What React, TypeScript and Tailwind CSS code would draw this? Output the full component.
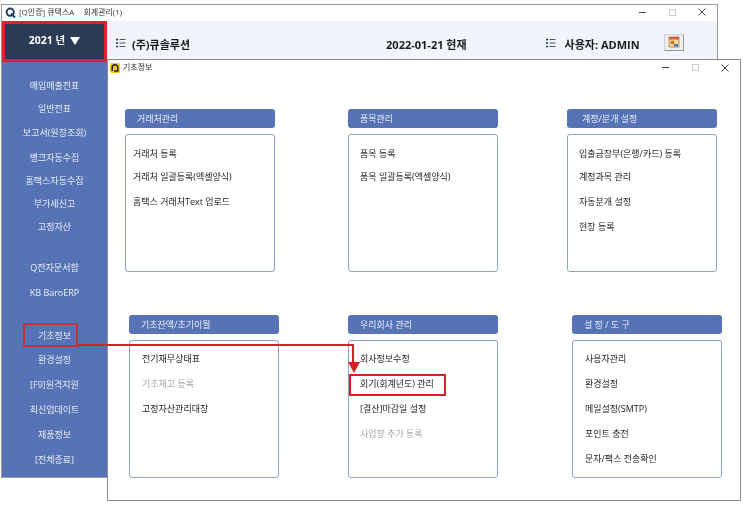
const FONT = "font-['Open_Sans','Noto_Sans_CJK_KR',sans-serif]";

const sideTop = [
  { label: "매입매출전표", h: 22.5 },
  { label: "일반전표", h: 24 },
  { label: "보고서(원장조회)", h: 25 },
  { label: "뱅크자동수집", h: 23.5 },
  { label: "홈택스자동수집", h: 23.5 },
  { label: "부가세신고", h: 23 },
  { label: "고정자산", h: 21.5 },
];
const sideMid = ["Q전자문서함", "KB BaroERP"];
const sideBottom = ["기초정보", "환경설정", "[F9]원격지원", "최신업데이트", "제품정보", "[전체종료]"];

function QLogo() {
  return (
    <svg width="11" height="11" viewBox="0 0 11 11" className="shrink-0">
      <circle cx="5.2" cy="5.2" r="3.6" fill="none" stroke="#1f3a5f" strokeWidth="2" />
      <path d="M6 6.5 L10 10.5" stroke="#1f3a5f" strokeWidth="2" />
    </svg>
  );
}

function ChildLogo() {
  return (
    <div className="w-[10px] h-[10px] rounded-[2px] bg-[#f5c518] flex items-center justify-center shrink-0">
      <svg width="8" height="8" viewBox="0 0 8 8">
        <path d="M1.2 7 V3.6 A2.8 2.8 0 0 1 6.8 3.6 V7 H3" fill="none" stroke="#222" strokeWidth="1.5" />
      </svg>
    </div>
  );
}

function ListIcon() {
  return (
    <svg width="10" height="10" viewBox="0 0 10 10" className="shrink-0 mt-[-4px]">
      <path d="M0 1.5h2M0 5h2M0 8.5h2" stroke="#1e2a8a" strokeWidth="1.6" />
      <path d="M3.5 1.5h6M3.5 5h6M3.5 8.5h6" stroke="#555" strokeWidth="1" />
    </svg>
  );
}

function WinButtons({ className }: { className: string }) {
  return (
    <div className={`flex items-center ${className}`}>
      <div className="w-[7px] h-px bg-[#444]" />
      <div className="ml-[23px] w-[7px] h-[7px] border border-[#cfcfcf]" />
      <svg width="8" height="8" viewBox="0 0 8 8" className="ml-[22px]">
        <path d="M0.5 0.5 L7.5 7.5 M7.5 0.5 L0.5 7.5" stroke="#333" strokeWidth="0.9" />
      </svg>
    </div>
  );
}

function Panel({
  title,
  items,
  rowH = 25,
  top = 5,
  left = 11,
  titleLeft = 12,
}: {
  title: string;
  items: { label: string; h?: number; muted?: boolean }[];
  rowH?: number;
  top?: number;
  left?: number;
  titleLeft?: number;
}) {
  return (
    <div className="w-[150px] shrink-0">
      <div
        className="h-[19px] rounded-[3px] bg-[#5673b5] flex items-center text-[9px] text-[#e8edf7]"
        style={{ paddingLeft: titleLeft }}
      >
        {title}
      </div>
      <div
        className="mt-[6px] h-[138px] rounded-[3px] border border-[#8fa3c7] bg-white flex flex-col text-[9px] text-[#222]"
        style={{ paddingTop: top, paddingLeft: left }}
      >
        {items.map((it) => (
          <div
            key={it.label}
            className={`flex items-center ${it.muted ? "text-[#a8a8a8]" : ""}`}
            style={{ height: it.h ?? rowH }}
          >
            {it.label}
          </div>
        ))}
      </div>
    </div>
  );
}

export default function App() {
  return (
    <div className={`relative w-[744px] h-[506px] bg-white overflow-hidden blur-[0.3px] ${FONT}`}>
      {/* Main window */}
      <div className="absolute left-px top-1 w-[717px] h-[474px] border border-[#9a9a9a] bg-white flex flex-col">
        <div className="h-[16px] flex items-center pl-[3px] pb-[2px] text-[8px] text-[#333] shrink-0">
          <QLogo />
          <span className="ml-[3px]">[Q인증] 큐택스A</span>
          <span className="ml-[9px]">회계관리(1)</span>
          <WinButtons className="ml-auto mr-[11px]" />
        </div>
        <div className="flex-1 flex min-h-0">
          <div className="w-[105px] bg-[#5673b5] flex flex-col shrink-0">
            <div className="h-[41px] bg-[#2b3a55] border-[3px] border-[#e0202a] flex items-center justify-center pb-[2px] text-[10.5px] font-bold text-white shrink-0">
              2021 년
              <svg width="10" height="8" viewBox="0 0 10 8" className="ml-[5px]">
                <path d="M0 0 H10 L5 8 Z" fill="#fff" />
              </svg>
            </div>
            <div className="mt-[12px] flex flex-col text-[9px] text-[#e8edf7]">
              {sideTop.map((s) => (
                <div key={s.label} className="flex items-center justify-center" style={{ height: s.h }}>
                  {s.label}
                </div>
              ))}
            </div>
            <div className="mt-[18.5px] flex flex-col text-[9px] text-[#e8edf7]">
              {sideMid.map((s) => (
                <div key={s} className="h-[25px] flex items-center justify-center">
                  {s}
                </div>
              ))}
            </div>
            <div className="mt-[17.5px] flex flex-col text-[9px] text-[#e8edf7]">
              {sideBottom.map((s) => (
                <div key={s} className="h-[24.8px] flex items-center justify-center">
                  {s}
                </div>
              ))}
            </div>
          </div>
          <div className="flex-1 flex flex-col">
            <div className="h-[40px] bg-[#f0f5fb] flex items-center shrink-0 text-[#1a1a1a] font-bold">
              <div className="ml-[9px] mt-[8px] flex items-center text-[11px]">
                <ListIcon />
                <span className="ml-[6px]">(주)큐솔루션</span>
              </div>
              <span className="ml-[196px] mt-[8px] text-[11px]">2022-01-21 현재</span>
              <div className="ml-[79px] mt-[8px] flex items-center text-[11px]">
                <ListIcon />
                <span className="ml-[9px]">사용자: ADMIN</span>
              </div>
              <div className="ml-[24px] mt-[2px] w-[20px] h-[17px] bg-[#eeeeee] border border-[#cfcfcf] border-b-[#999] border-r-[#999] flex items-center justify-center">
                <svg width="12" height="12" viewBox="0 0 12 12">
                  <rect x="1" y="1" width="10" height="10" fill="#f4d9a0" stroke="#b5763a" strokeWidth="0.8" />
                  <rect x="1" y="1" width="10" height="2.5" fill="#d9583b" />
                  <circle cx="4.5" cy="6.5" r="2" fill="#c47a2c" />
                  <rect x="6" y="8" width="4" height="2.5" fill="#4a7ec2" />
                </svg>
              </div>
            </div>
          </div>
        </div>
      </div>

      {/* Child window */}
      <div className="absolute left-[107px] top-[59px] w-[634px] h-[442px] border border-[#8a8a8a] bg-white flex flex-col">
        <div className="h-[15px] flex items-center pl-[2px] text-[8px] text-[#333] shrink-0">
          <ChildLogo />
          <span className="ml-[3px] mt-[-2px]">기초정보</span>
          <WinButtons className="ml-auto mr-[11px]" />
        </div>
        <div className="mt-[34px] ml-[17px] flex">
          <Panel
            title="거래처관리"
            top={7}
            left={7}
            items={[
              { label: "거래처 등록", h: 24 },
              { label: "거래처 일괄등록(엑셀양식)", h: 22 },
              { label: "홈택스 거래처Text 업로드", h: 28 },
            ]}
          />
          <div className="w-[73px]" />
          <Panel
            title="품목관리"
            top={7}
            items={[
              { label: "품목 등록", h: 24 },
              { label: "품목 일괄등록(엑셀양식)", h: 22 },
            ]}
          />
          <div className="w-[69px]" />
          <Panel
            title="계정/분개 설정"
            titleLeft={15}
            top={7}
            items={[
              { label: "입출금장부(은행/카드) 등록", h: 24 },
              { label: "계정과목 관리", h: 22 },
              { label: "자동분개 설정", h: 28 },
              { label: "현장 등록", h: 22 },
            ]}
          />
        </div>
        <div className="mt-[43px] ml-[21px] flex">
          <Panel
            title="기초잔액/초기이월"
            left={12}
            items={[{ label: "전기재무상태표" }, { label: "기초재고 등록", muted: true }, { label: "고정자산관리대장" }]}
          />
          <div className="w-[69px]" />
          <Panel
            title="우리회사 관리"
            items={[
              { label: "회사정보수정" },
              { label: "회기(회계년도) 관리" },
              { label: "[결산]마감일 설정" },
              { label: "사업장 추가 등록", muted: true },
            ]}
          />
          <div className="w-[74px]" />
          <Panel
            title="설 정 / 도 구"
            left={12}
            items={[
              { label: "사용자관리" },
              { label: "환경설정" },
              { label: "메일설정(SMTP)" },
              { label: "포인트 충전" },
              { label: "문자/팩스 전송확인" },
            ]}
          />
        </div>
      </div>

      {/* Annotations */}
      <div className="absolute left-[23px] top-[323px] w-[55px] h-[24px] border-2 border-[#c4303a]" />
      <div className="absolute left-[77px] top-[344px] w-[277px] h-[2px] bg-[#d8202a]" />
      <div className="absolute left-[352px] top-[344px] w-[2px] h-[20px] bg-[#d8202a]" />
      <svg width="12" height="11" viewBox="0 0 12 11" className="absolute left-[348px] top-[362px]">
        <path d="M0 0 H12 L6 11 Z" fill="#d8202a" />
      </svg>
      <div className="absolute left-[349px] top-[374px] w-[97px] h-[22px] border-2 border-[#d8202a]" />
    </div>
  );
}
